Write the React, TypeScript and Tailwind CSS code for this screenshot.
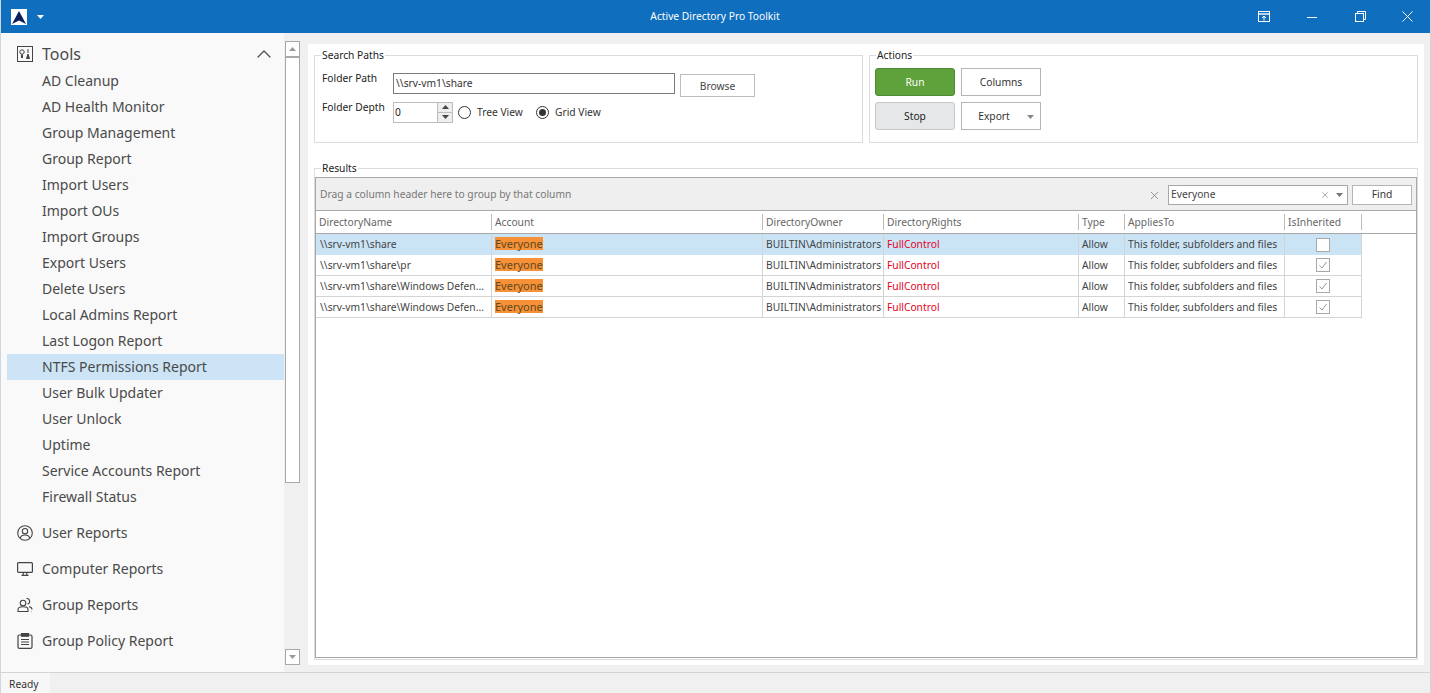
import { ChevronUp, X } from 'lucide-react';
import clsx from 'clsx';

const TOOLS = [
  'AD Cleanup',
  'AD Health Monitor',
  'Group Management',
  'Group Report',
  'Import Users',
  'Import OUs',
  'Import Groups',
  'Export Users',
  'Delete Users',
  'Local Admins Report',
  'Last Logon Report',
  'NTFS Permissions Report',
  'User Bulk Updater',
  'User Unlock',
  'Uptime',
  'Service Accounts Report',
  'Firewall Status',
];

const COLUMNS = [
  { name: 'DirectoryName', width: 'w-[176px]' },
  { name: 'Account', width: 'w-[271px]' },
  { name: 'DirectoryOwner', width: 'w-[121px]' },
  { name: 'DirectoryRights', width: 'w-[195px]' },
  { name: 'Type', width: 'w-[46px]' },
  { name: 'AppliesTo', width: 'w-[160px]' },
  { name: 'IsInherited', width: 'w-[77px]' },
];

const ROWS = [
  { path: '\\\\srv-vm1\\share', inherited: false, selected: true },
  { path: '\\\\srv-vm1\\share\\pr', inherited: true, selected: false },
  { path: '\\\\srv-vm1\\share\\Windows Defen...', inherited: true, selected: false },
  { path: '\\\\srv-vm1\\share\\Windows Defen...', inherited: true, selected: false },
];

function Logo() {
  return (
    <svg width="16" height="16" viewBox="0 0 16 16">
      <rect width="16" height="16" fill="#fff" />
      <path d="M8 2 L15 15 L8 11.5 L1 15 Z" fill="#0b1f5c" />
    </svg>
  );
}

function Caret({ className }: { className?: string }) {
  return (
    <svg width="7" height="4" viewBox="0 0 7 4" className={className}>
      <path d="M0 0 H7 L3.5 4 Z" fill="currentColor" />
    </svg>
  );
}

function TitleBar() {
  return (
    <div className="flex h-[33px] shrink-0 items-center bg-[#106ebe] text-white">
      <div className="ml-[10px] flex items-center gap-[10px]">
        <Logo />
        <Caret />
      </div>
      <div className="flex-1 pl-[146px] text-center text-[10.25px]">Active Directory Pro Toolkit</div>
      <div className="flex items-center">
        <span className="flex w-[48px] justify-center">
          <svg width="12" height="12" viewBox="0 0 12 12" fill="none" stroke="#fff">
            <rect x="0.5" y="0.5" width="11" height="10" />
            <path d="M0.5 3 H11.5" strokeWidth="1.4" />
            <path d="M6 9.5 V5 M4 7 L6 5 L8 7" />
          </svg>
        </span>
        <span className="flex w-[48px] justify-center">
          <svg width="10" height="10" viewBox="0 0 10 10" fill="none" stroke="#fff">
            <path d="M0 5.5 H10" />
          </svg>
        </span>
        <span className="flex w-[48px] justify-center">
          <svg width="11" height="11" viewBox="0 0 11 11" fill="none" stroke="#fff">
            <rect x="0.5" y="2.5" width="8" height="8" />
            <path d="M2.5 2.5 V0.5 H10.5 V8.5 H8.5" />
          </svg>
        </span>
        <span className="flex w-[46px] justify-center">
          <svg width="11" height="11" viewBox="0 0 11 11" fill="none" stroke="#fff">
            <path d="M0.5 0.5 L10.5 10.5 M10.5 0.5 L0.5 10.5" />
          </svg>
        </span>
      </div>
    </div>
  );
}

function ToolsIcon() {
  return (
    <svg width="16" height="16" viewBox="0 0 16 16" fill="none" stroke="#444">
      <rect x="0.5" y="0.5" width="15" height="15" />
      <circle cx="5" cy="6" r="2.2" />
      <path d="M5 8.5 V12" strokeWidth="2" />
      <path d="M11 3 V7" />
      <path d="M9.5 12.5 L11 8 L12.5 12.5 Z" fill="#444" />
    </svg>
  );
}

function UserIcon() {
  return (
    <svg width="16" height="16" viewBox="0 0 16 16" fill="none" stroke="#444" strokeWidth="1.1">
      <circle cx="8" cy="8" r="7.3" />
      <circle cx="8" cy="6.2" r="2.7" />
      <path d="M3.2 13 C4 10.5 6 10 8 10 C10 10 12 10.5 12.8 13" />
    </svg>
  );
}

function ComputerIcon() {
  return (
    <svg width="16" height="16" viewBox="0 0 16 16" fill="none" stroke="#444" strokeWidth="1.2">
      <rect x="0.6" y="1.6" width="14.8" height="9.8" rx="1" />
      <path d="M6.5 11.5 L6 14 M9.5 11.5 L10 14 M4.5 14.4 H11.5" />
    </svg>
  );
}

function GroupIcon() {
  return (
    <svg width="16" height="16" viewBox="0 0 16 16" fill="none" stroke="#444" strokeWidth="1.1">
      <circle cx="6" cy="6" r="2.8" />
      <path d="M1 14.5 V12.5 C1 10.5 3 9.7 6 9.7 C9 9.7 11 10.5 11 12.5 V14.5 Z" />
      <path d="M9.5 1.5 A2.8 2.8 0 0 1 10.5 7" />
      <path d="M12 9.8 C14 10 15 11 15 12.5 M14.6 14.5 H15" />
    </svg>
  );
}

function PolicyIcon() {
  return (
    <svg width="16" height="16" viewBox="0 0 16 16" fill="none" stroke="#444" strokeWidth="1.2">
      <rect x="1" y="2" width="14" height="13.4" rx="1.5" />
      <rect x="4.5" y="0.6" width="7" height="2.6" fill="#444" />
      <path d="M4 6.5 H12 M4 9 H12 M4 11.5 H12" />
    </svg>
  );
}

function Sidebar() {
  const reports = [
    { name: 'User Reports', icon: <UserIcon /> },
    { name: 'Computer Reports', icon: <ComputerIcon /> },
    { name: 'Group Reports', icon: <GroupIcon /> },
    { name: 'Group Policy Report', icon: <PolicyIcon /> },
  ];

  return (
    <div className="flex w-[283px] shrink-0 flex-col bg-[#f9f9f9] pl-[6px] pt-[8px] text-[14px] text-[#4a4a4a]">
      <div className="mb-px flex h-[26px] items-center pl-[10px] pr-[8px]">
        <ToolsIcon />
        <span className="ml-[9px] flex-1 text-[16px]">Tools</span>
        <ChevronUp size={24} strokeWidth={1.2} />
      </div>
      {TOOLS.map((tool) => (
        <div
          key={tool}
          className={clsx(
            'flex h-[26px] items-center pb-[2px] pl-[35px]',
            tool === 'NTFS Permissions Report' && 'bg-[#cce4f5]',
          )}
        >
          {tool}
        </div>
      ))}
      <div className="h-[5px]" />
      {reports.map((report) => (
        <div key={report.name} className="flex h-[36px] items-center pl-[10px]">
          {report.icon}
          <span className="-mt-[2px] ml-[9px]">{report.name}</span>
        </div>
      ))}
    </div>
  );
}

function Scrollbar() {
  return (
    <div className="ml-px flex w-[15px] shrink-0 flex-col pt-[8px] pb-[7px] text-[#9a9a9a]">
      <div className="flex h-[16px] items-center justify-center border border-[#a8a8a8] bg-white">
        <Caret className="rotate-180" />
      </div>
      <div className="h-[426px] border border-[#a8a8a8] bg-white" />
      <div className="flex-1" />
      <div className="flex h-[16px] items-center justify-center border border-[#a8a8a8] bg-white">
        <Caret />
      </div>
    </div>
  );
}

function GroupBox({ title, className, children }: { title: string; className?: string; children?: React.ReactNode }) {
  return (
    <fieldset className={clsx('border border-[#dcdcdc] px-0', className)}>
      <legend className="ml-[6px] px-px text-[10.25px] leading-[13px] text-[#222]">{title}</legend>
      {children}
    </fieldset>
  );
}

function Button({ children, className }: { children: React.ReactNode; className?: string }) {
  return (
    <div className={clsx('flex h-[28px] w-[80px] items-center justify-center pt-px text-[10.25px]', className)}>
      {children}
    </div>
  );
}

function Radio({ label, checked, className }: { label: string; checked?: boolean; className?: string }) {
  return (
    <div className={clsx('flex items-center gap-[6px]', className)}>
      <span className="flex h-[13px] w-[13px] items-center justify-center rounded-full border border-[#333] bg-white">
        {checked && <span className="h-[7px] w-[7px] rounded-full bg-[#333]" />}
      </span>
      {label}
    </div>
  );
}

function SearchPaths() {
  return (
    <GroupBox title="Search Paths" className="h-[94px] w-[549px] shrink-0">
      <div className="flex flex-col pl-[7px] pt-[11px] text-[10.25px] text-[#333]">
        <div className="flex items-start">
          <span className="-mt-[2px] w-[71px] text-[#222]">Folder Path</span>
          <div className="flex h-[21px] w-[282px] items-center border border-[#7a7a7a] bg-white px-[2px]">
            \\srv-vm1\share
          </div>
          <div className="ml-[5px] mt-px flex h-[23px] w-[75px] items-center justify-center border border-[#bdbdbd] pt-[2px] text-[#444]">
            Browse
          </div>
        </div>
        <div className="mt-[5px] flex items-start">
          <span className="-mt-[2px] w-[71px] text-[#222]">Folder Depth</span>
          <div className="flex h-[21px] w-[60px] items-center justify-between border border-[#bdbdbd] bg-white pl-[1px] text-[#222]">
            0
            <div className="flex h-full w-[15px] flex-col border-l border-[#bdbdbd] bg-[#eeeeee] text-[#444]">
              <span className="flex h-1/2 items-center justify-center border-b border-[#bdbdbd]">
                <Caret className="rotate-180" />
              </span>
              <span className="flex h-1/2 items-center justify-center">
                <Caret />
              </span>
            </div>
          </div>
          <div className="ml-[5px] flex h-[21px] items-center">
            <Radio label="Tree View" className="w-[78px]" />
            <Radio label="Grid View" checked />
          </div>
        </div>
      </div>
    </GroupBox>
  );
}

function Actions() {
  return (
    <GroupBox title="Actions" className="ml-[6px] h-[94px] flex-1">
      <div className="grid grid-cols-[80px_80px] gap-x-[6px] gap-y-[6px] pl-[5px] pt-[6px] text-[#333]">
        <Button className="rounded-[3px] border border-[#4f8a33] bg-[#5fa13b] text-white">Run</Button>
        <Button className="border border-[#b5b5b5]">Columns</Button>
        <Button className="rounded-[3px] border border-[#c8c8c8] bg-[#e6e7e9] text-[#222]">Stop</Button>
        <Button className="relative border border-[#b5b5b5] pr-[14px]">
          Export
          <Caret className="absolute right-[6px] top-[12px] text-[#888]" />
        </Button>
      </div>
    </GroupBox>
  );
}

function SearchBar() {
  return (
    <div className="flex h-[33px] shrink-0 items-center border-b border-[#a8a8a8] bg-[#efefef] pl-[4px] pr-[4px] pt-[2px] text-[10.25px] text-[#777]">
      <span className="flex-1">Drag a column header here to group by that column</span>
      <X size={13} strokeWidth={1.2} className="mr-[7px] text-[#666]" />
      <div className="flex h-[20px] w-[180px] items-center border border-[#a8a8a8] bg-white pl-[2px] text-[#444]">
        <span className="flex-1">Everyone</span>
        <X size={10} strokeWidth={1.2} className="mr-[6px] text-[#666]" />
        <Caret className="mr-[4px] text-[#777]" />
      </div>
      <div className="ml-[4px] flex h-[20px] w-[60px] items-center justify-center border border-[#b5b5b5] bg-white text-[#333]">
        Find
      </div>
    </div>
  );
}

function GridHeader() {
  return (
    <div className="flex h-[23px] shrink-0 items-center border-b border-[#a8a8a8] bg-white text-[10.25px] text-[#666]">
      {COLUMNS.map((column) => (
        <div key={column.name} className={clsx('h-[16px] border-r border-[#bdbdbd] pl-[3px] leading-[17px]', column.width)}>
          {column.name}
        </div>
      ))}
    </div>
  );
}

function GridRow({ path, inherited, selected }: { path: string; inherited: boolean; selected: boolean }) {
  const cell = 'flex h-full items-center border-r border-[#d4d4d4] px-[3px] whitespace-nowrap overflow-hidden';
  return (
    <div
      className={clsx(
        'flex h-[21px] w-[1046px] shrink-0 items-center text-[10.25px] leading-[13px] text-[#444]',
        selected ? 'bg-[#cae3f5]' : 'border-b border-[#d4d4d4]',
      )}
    >
      <div className={clsx(cell, 'w-[176px] pl-[4px]')}>{path}</div>
      <div className={clsx(cell, 'w-[271px]')}>
        <span className="mb-[2px] bg-[#f79138] text-[11px] text-[#5f4a20]">Everyone</span>
      </div>
      <div className={clsx(cell, 'w-[121px]')}>BUILTIN\Administrators</div>
      <div className={clsx(cell, 'w-[195px] text-[#e6001a]')}>FullControl</div>
      <div className={clsx(cell, 'w-[46px]')}>Allow</div>
      <div className={clsx(cell, 'w-[160px]')}>This folder, subfolders and files</div>
      <div className={clsx(cell, 'w-[77px] justify-center')}>
        <span
          className={clsx(
            'flex h-[14px] w-[14px] items-center justify-center border border-[#a8a8a8]',
            selected && 'bg-white',
          )}
        >
          {inherited && (
            <svg width="10" height="10" viewBox="0 0 10 10" fill="none" stroke="#999">
              <path d="M1.5 5.5 L4 8 L8.5 2" />
            </svg>
          )}
        </span>
      </div>
    </div>
  );
}

function Results() {
  return (
    <GroupBox title="Results" className="mt-[19px] min-h-0 flex-1">
      <div className="mt-[2px] flex h-[481px] flex-col border border-[#a8a8a8] bg-white">
        <SearchBar />
        <GridHeader />
        {ROWS.map((row, index) => (
          <GridRow key={index} {...row} />
        ))}
      </div>
    </GroupBox>
  );
}

function StatusBar() {
  return (
    <div className="flex h-[21px] shrink-0 border-t border-[#d4d4d4] bg-[#f0f0f0] text-[10.25px] text-[#333]">
      <div className="flex w-[49px] items-center bg-[#f7f7f7] pl-[8px] pt-[3px]">Ready</div>
    </div>
  );
}

export default function App() {
  return (
    <div
      className="flex h-screen w-full flex-col overflow-hidden border-x border-[#cfd6dc] bg-[#f0f0f0]"
      style={{ fontFamily: '"Noto Sans", sans-serif' }}
    >
      <TitleBar />
      <div className="flex min-h-0 flex-1">
        <Sidebar />
        <Scrollbar />
        <div className="mb-[7px] ml-[8px] mr-[6px] mt-[11px] flex min-w-0 flex-1 flex-col bg-white pb-[5px] pl-[6px] pr-[6px] pt-[5px]">
          <div className="flex shrink-0">
            <SearchPaths />
            <Actions />
          </div>
          <Results />
        </div>
      </div>
      <StatusBar />
    </div>
  );
}
